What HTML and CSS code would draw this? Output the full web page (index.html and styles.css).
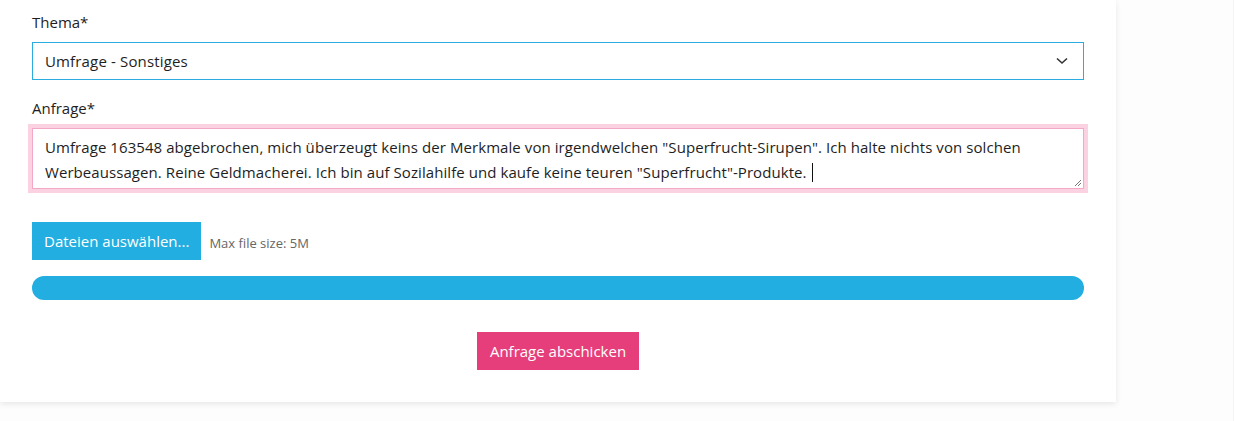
FILE: index.html
```html
<!DOCTYPE html>
<html lang="de">
<head>
<meta charset="utf-8">
<link rel="stylesheet" href="styles.css">
</head>
<body>
<div class="page">
  <form class="card">
    <label class="label">Thema*</label>
    <div class="select">
      <span>Umfrage - Sonstiges</span>
      <svg class="chev" width="12" height="8" viewBox="0 0 12 8"><path d="M1 1.5 L6 6 L11 1.5" fill="none" stroke="#333" stroke-width="1.6"/></svg>
    </div>
    <label class="label label-2">Anfrage*</label>
    <div class="textarea">Umfrage 163548 abgebrochen, mich überzeugt keins der Merkmale von irgendwelchen "Superfrucht-Sirupen". Ich halte nichts von solchen Werbeaussagen. Reine Geldmacherei. Ich bin auf Sozilahilfe und kaufe keine teuren "Superfrucht"-Produkte.<span class="caret"></span><svg class="grip" width="9" height="9" viewBox="0 0 9 9"><path d="M8 2 L2 8 M8 5 L5 8" stroke="#777" stroke-width="1" fill="none"/></svg></div>
    <div class="upload">
      <button type="button" class="btn btn-blue">Dateien auswählen...</button>
      <span class="hint">Max file size: 5M</span>
    </div>
    <div class="progress"></div>
    <div class="actions">
      <button type="button" class="btn btn-pink">Anfrage abschicken</button>
    </div>
  </form>
</div>
</body>
</html>
```
FILE: styles.css
```css
* { box-sizing: border-box; }
html, body { margin: 0; }
body {
  background: #fdfdfd;
  font-family: "Open Sans", "Noto Sans", sans-serif;
  font-size: 15px;
  color: #1e1e1e;
  height: 421px;
  overflow: hidden;
  border-right: 1px solid #f4f4f4;
}
.page { width: 1116px; }
.card {
  background: #fff;
  padding: 12px 32px 32px;
  box-shadow: 0 2px 6px rgba(0,0,0,0.09);
  display: flex;
  flex-direction: column;
}
.label {
  display: block;
  line-height: 20px;
  margin-bottom: 10px;
}
.label-2 { margin-top: 18px; }
.select {
  height: 38px;
  border: 1px solid #29ace0;
  display: flex;
  align-items: center;
  justify-content: space-between;
  padding: 0 15px 0 12px;
  letter-spacing: 0.15px;
}
.select .chev { display: block; }
.textarea {
  position: relative;
  height: 61px;
  border: 1px solid #f3a9c6;
  box-shadow: 0 0 0 4px #fbd2e1;
  padding: 6px 12px;
  line-height: 25px;
  letter-spacing: 0.07px;
}
.caret {
  display: inline-block;
  width: 1px;
  height: 19px;
  background: #111;
  vertical-align: -4px;
  margin-left: 5px;
}
.grip { position: absolute; right: 1px; bottom: 1px; }
.upload {
  margin-top: 33px;
  display: flex;
  align-items: center;
  gap: 8px;
}
.btn {
  font-family: inherit;
  font-size: 15px;
  color: #fff;
  border: 0;
  height: 38px;
  padding: 0 12px;
  border-radius: 0;
}
.btn-blue { background: #22aee0; }
.btn-pink { background: #e63e7b; padding: 0 13px; }
.hint { font-size: 13px; color: #666; margin-top: 3px; }
.progress {
  margin-top: 16px;
  height: 24px;
  border-radius: 12px;
  background: #22aee0;
}
.actions {
  margin-top: 32px;
  display: flex;
  justify-content: center;
}
```
